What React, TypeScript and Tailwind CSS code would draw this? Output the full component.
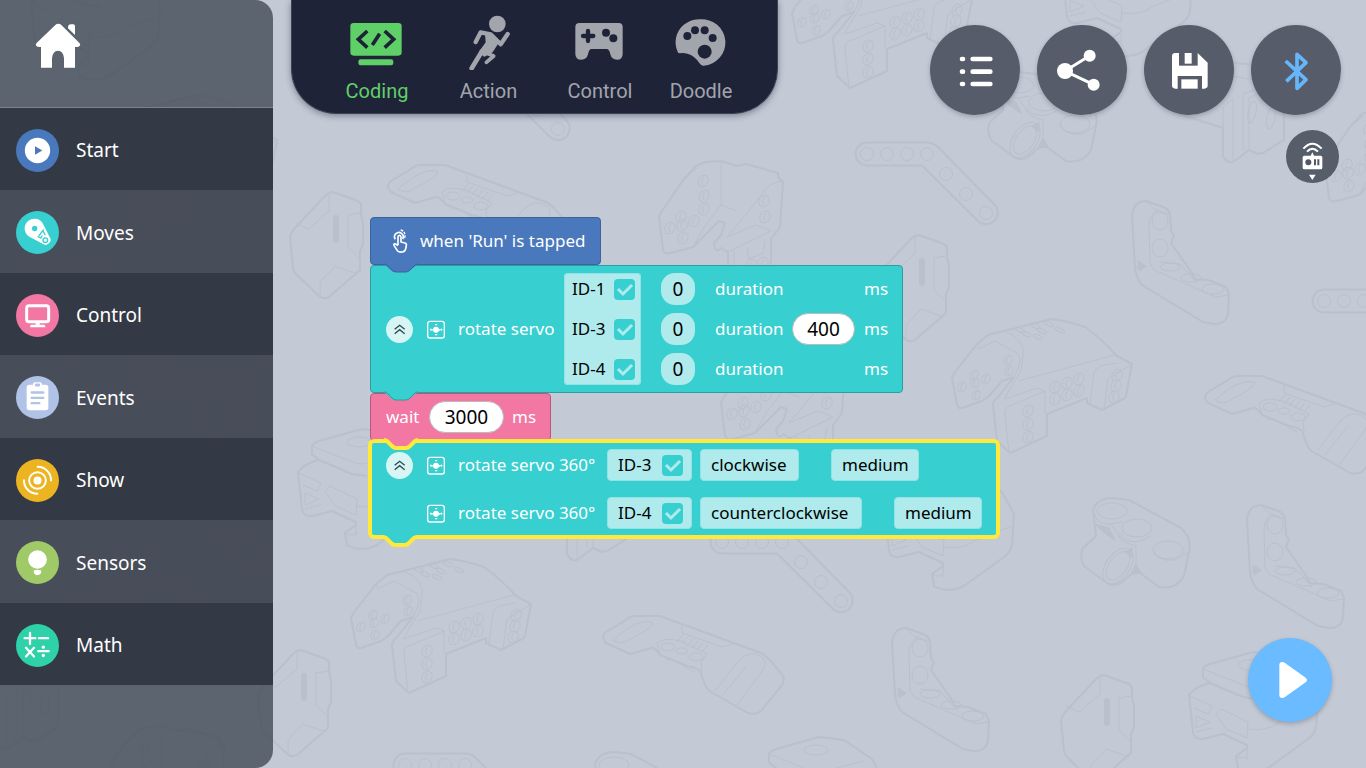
import { useState } from "react";
import type { ReactNode } from "react";

const LABEL_FONT = "font-['Noto_Sans','Open_Sans',sans-serif]";

/* ---------- backdrop ---------- */

function Holes({ at, rx = 4, ry = 5 }: { at: number[][]; rx?: number; ry?: number }) {
  return (
    <g>
      {at.map(([x, y]) => (
        <g key={`${x}-${y}`}>
          <ellipse cx={x} cy={y} rx={rx} ry={ry} transform={`rotate(25 ${x} ${y})`} />
          {ry > 3 && <path d={`M${x + 1} ${y - 4}q-4 4 -1 8`} />}
        </g>
      ))}
    </g>
  );
}

function Parts() {
  return (
    <defs>
      <g id="beam">
        <path strokeWidth="2" d="M0-11.5H60Q66-11.5 71-7L127 50A11.5 11.5 0 0 1 111 67L55 11.5H0A11.5 11.5 0 0 1 0-11.5Z" />
        {[[0, 0], [20, 0], [40, 0], [60, 0], [79, 20], [99, 40], [119, 59]].map(([x, y]) => (
          <circle key={x} cx={x} cy={y} r="6.5" />
        ))}
      </g>
      <g id="box">
        <path strokeWidth="2" d="M43 0 68 9 71 12V22L73 31V52L70 59V78L39 105Q34 108 29 104L6 82Q4 80 3 76L0 46Q0 42 5 36L35 4Q39 0 43 0Z" />
        <path d="M39 1V19L18 37 5 31M70 21 58 23V55L70 67M30 104V90L45 74 68 82" />
        <path strokeWidth="6" strokeLinecap="round" d="M46 26V48" />
      </g>
      <g id="plate">
        <path strokeWidth="2" d="M32 0H57L158 37Q166 41 180 60Q182 64 179 69L158 95Q153 99 145 97L108 76Q103 73 101 66L97 55Q92 51 84 50L57 39Q52 31 48 32L27 38 3 27Q-3 21 3 16L20 6Q27 0 32 0Z" />
        <path d="M10 24Q34 2 49 6 53 10 27 23 18 30 10 24M79 9V17L119 31 130 28M57 39 54 27Q62 20 80 26L104 38 98 46 99 56M64 45 66 42 92 56M112 75 136 44Q148 34 157 40 165 44 160 54L134 89M120 79 143 50M74 26 80 19M79 28 85 21M84 30 90 23M89 32 95 25M94 34 100 27M99 36 105 29" />
        <ellipse cx="65" cy="31" rx="7" ry="4" />
        <ellipse cx="79" cy="35" rx="6" ry="3" />
        <ellipse cx="93" cy="41" rx="7" ry="4" />
      </g>
      <g id="body">
        <path strokeWidth="2" d="M99 0Q116 2 133 8 150 20 165 37L180 45 174 77Q173 80 169 81L150 91 135 84V79L95 95V117L58 134 45 122 41 86Q41 82 46 78L62 58 50 62 36 78 30 82 10 89Q6 90 5 86L0 59 3 53 25 25 36 16 52 12Z" />
        <path d="M25 25 27 30 43 22 65 34Q68 36 68 42L66 50 62 58M52 12Q74 20 71 38L69 52 52 80M66 62 163 36M53 95Q52 88 60 86L93 72V95M53 95 57 134M93 72 85 69 53 80M138 84 142 54Q144 48 152 46L165 44M152 90 156 60 180 45" />
        <Holes at={[[22, 56], [10, 68], [23, 64], [34, 60], [24, 76], [56, 41], [57, 52]]} />
        <Holes at={[[76, 92], [76, 105], [76, 118], [103, 68], [115, 64], [127, 60], [103, 80], [115, 76], [127, 72], [165, 56], [164, 67], [162, 78]]} rx={5} ry={6} />
        <Holes at={[[68, 11], [83, 7], [97, 5], [74, 15], [90, 12], [108, 11], [86, 18]]} rx={5} ry={2} />
      </g>
      <g id="bracket">
        <path strokeWidth="2" d="M62 0 78 5 87 3 119 12V16L124 21 121 66 112 78V116L75 133Q64 135 56 129L55 122 60 118 69 121V91L62 87Q58 92 56 87L55 82 62 74 66 62 60 60 34 86 12 92Q6 94 4 89L0 55 3 50 25 18 37 5 46 1Z" />
        <path d="M62 1V44L78 50M62 44 45 66 34 86M124 20Q108 22 104 32L88 52 68 76 97 64 112 70 75 88 69 91M75 88V133M25 18 38 7M88 88 90 98 104 92 106 80" />
        <Holes at={[[44, 20], [45, 35], [45, 48], [22, 56], [11, 67], [23, 64], [35, 60], [24, 77], [105, 40], [106, 56], [92, 104], [104, 102]]} rx={5} ry={6} />
      </g>
      <g id="elbow">
        <path strokeWidth="2" d="M14 0 31 6Q37 8 38 14L39 30 42 35 39 42 60 72 63 78 76 79 94 86 97 93 96 112Q95 123 82 123L71 121 10 84Q4 76 3 67L0 14Q2 0 14 0Z" />
        <path d="M14 0 22 8 38 14M18 62 17 25Q17 12 27 9M18 62 22 69 84 96 97 94M3 67 14 65M28 61 48 63 56 72 65 82" />
        <path className="fill-[#bac1cd]" d="M6 60 14 65 7 70Z" />
        <ellipse cx="28" cy="20" rx="8" ry="9" />
        <ellipse cx="28" cy="47" rx="8" ry="9" />
        <ellipse cx="38" cy="66" rx="10" ry="4" />
        <ellipse cx="59" cy="77" rx="10" ry="4" />
        <ellipse cx="81" cy="88" rx="11" ry="5" />
      </g>
      <g id="clamp">
        <path strokeWidth="2" d="M12 12Q16 0 32 0L48 2 100 30Q111 40 108 54L103 78Q95 92 78 89L55 72 40 85Q32 89 26 85L3 68Q-2 58 2 50L15 38Z" />
        <path d="M13 16Q18 28 30 26L42 24M40 35Q42 46 60 43L70 38M72 52Q76 64 94 62L108 54M55 72V48Q44 46 37 38M30 26 40 40" />
        <path className="fill-[#bac1cd]" d="M14 26 28 30 34 42 22 34ZM51 50V60L44 54ZM55 66 60 75 50 76Z" />
        <ellipse cx="31" cy="13" rx="15" ry="8" />
        <ellipse cx="56" cy="30" rx="15" ry="9" />
        <ellipse cx="87" cy="52" rx="15" ry="9" />
        <ellipse cx="37" cy="68" rx="9" ry="16" transform="rotate(35 37 68)" />
        <ellipse cx="37" cy="68" rx="12" ry="20" transform="rotate(35 37 68)" />
      </g>
      <g id="mount">
        <path strokeWidth="2" d="M22 31 15 25V17Q16 14 22 12L65 0 90 3 118 22 130 44 128 75Q127 82 120 87L80 116Q64 124 50 116L48 104 59 96V93L35 82 15 87Q6 88 5 80L1 43Q8 34 22 31L55 45 70 47" />
        <path d="M15 17 58 34Q64 36 72 34L110 24M2 44 24 54 20 62 6 56M28 62 33 57 60 70 59 86 38 77ZM8 64 22 70 8 76ZM8 80 24 76M48 104Q54 108 60 104M60 77Q78 80 92 70L128 56M59 93V108M42 38 50 44" />
        <ellipse cx="62" cy="13" rx="12" ry="5" />
      </g>
      <g id="stand">
        <path strokeWidth="2" d="M4 2Q8-1 20 1L84 7Q88 9 87 20L107 22 111 28V82L90 95 85 96 76 92 60 104Q54 106 50 98V70L6 56Z" />
        <path d="M4 10 84 22 87 30 70 36V92M0 3 4 10M60 40 50 50V70M60 40V104M76 92V40L96 30M111 28 98 32 87 46" />
        <ellipse cx="79" cy="54" rx="4" ry="11" transform="rotate(12 79 54)" />
        <ellipse cx="98" cy="60" rx="4" ry="11" transform="rotate(12 98 60)" />
      </g>
    </defs>
  );
}

const scatter: [string, number, number][] = [
  ["beam", 867, 154], ["beam", 722, 542], ["beam", 1324, 301], ["beam", 405, 765], ["beam", 137, 499], ["beam", 439, 70],
  ["box", 290, 192], ["box", 258, 650], ["box", 876, 235], ["box", 1061, 675],
  ["plate", 603, 616], ["plate", 388, 165], ["plate", 1205, 376], ["plate", 43, 560],
  ["body", 351, 559], ["body", 952, 319], ["body", 97, 95], ["body", 792, -46],
  ["bracket", 659, 161], ["bracket", 100, 726], ["bracket", 135, 307], ["bracket", 721, 347], ["bracket", 1325, 109],
  ["elbow", 1132, 201], ["elbow", 1247, 505], ["elbow", 892, 628],
  ["clamp", 1081, 498], ["clamp", 988, 72], ["clamp", 583, 752],
  ["mount", 1188, 652], ["mount", 884, 470], ["mount", 297, 429], ["mount", 30, -40], ["mount", 754, 737], ["mount", 1062, -64],
  ["stand", 1173, 58], ["stand", 20, 255], ["stand", -53, 645], ["stand", 517, 456],
];

function Backdrop() {
  return (
    <svg
      aria-hidden="true"
      className="absolute inset-0 h-full w-full fill-none stroke-[#bac1cd]"
      viewBox="0 0 1366 768"
      preserveAspectRatio="xMinYMin slice"
      strokeLinejoin="round"
    >
      <Parts />
      {scatter.map(([name, x, y]) => (
        <use key={`${name}${x}`} href={`#${name}`} x={x} y={y} />
      ))}
    </svg>
  );
}

/* ---------- sidebar ---------- */

type Category = { name: string; box: string; art: ReactNode };

const categories: Category[] = [
  {
    name: "Start",
    box: "48 385.5 129 129",
    art: (
      <>
        <circle cx="112.5" cy="450" r="64.5" fill="#4979bc" />
        <circle cx="112.5" cy="450" r="38" fill="#fff" />
        <path d="M105 437v26l22-13z" fill="#4979bc" />
      </>
    ),
  },
  {
    name: "Moves",
    box: "48 632.5 129 129",
    art: (
      <>
        <circle cx="112.5" cy="697" r="64.5" fill="#37cfd0" />
        <path d="M103 656a29 29 0 0 1 27 17l18 36a15 15 0 0 1-20 22l-40-21a29 29 0 0 1 15-54z" fill="#fff" />
        <circle cx="104" cy="685" r="8" fill="#37cfd0" />
        <path d="M131 688l-15 20M113 709l9 5 5-8M136 705l-7-12" stroke="#37cfd0" strokeWidth="4" fill="none" />
        <circle cx="136" cy="720" r="7" fill="none" stroke="#37cfd0" strokeWidth="4" />
      </>
    ),
  },
  {
    name: "Control",
    box: "48 880.5 129 129",
    art: (
      <>
        <circle cx="112.5" cy="945" r="64.5" fill="#f377a3" />
        <rect x="80" y="916" width="66" height="48" rx="7" fill="none" stroke="#fff" strokeWidth="9" />
        <path d="M107 966h12v7h14q3 2 3 7H90q0-5 3-7h14z" fill="#fff" />
      </>
    ),
  },
  {
    name: "Events",
    box: "48 -12.5 129 129",
    art: (
      <>
        <circle cx="112.5" cy="52" r="64.5" fill="#b0c3e6" />
        <rect x="80" y="14" width="65" height="76" rx="8" fill="#fff" />
        <rect x="99" y="6" width="27" height="16" rx="6" fill="#fff" />
        <rect x="105" y="10" width="15" height="9" rx="4" fill="#b0c3e6" />
        <path d="M95 37h35M95 53h35M95 69h23" stroke="#b0c3e6" strokeWidth="7" strokeLinecap="round" />
      </>
    ),
  },
  {
    name: "Show",
    box: "48 236.5 129 129",
    art: (
      <>
        <circle cx="112.5" cy="301" r="64.5" fill="#ecb421" />
        <circle cx="112.5" cy="301" r="12" fill="#fff" />
        <g fill="none" stroke="#fff" strokeWidth="6" strokeLinecap="round">
          <circle cx="112.5" cy="301" r="25" />
          <path d="M113 260a40 40 0 0 1 40 41M112 341a40 40 0 0 1-40-41" />
        </g>
      </>
    ),
  },
  {
    name: "Sensors",
    box: "48 482.5 129 129",
    art: (
      <>
        <circle cx="112.5" cy="547" r="64.5" fill="#9fca67" />
        <circle cx="112.5" cy="538" r="28" fill="#fff" />
        <path d="M101 571q11-4 23 0 0 14-12 14-11 0-11-14z" fill="#fff" />
      </>
    ),
  },
  {
    name: "Math",
    box: "48 731.5 129 129",
    art: (
      <>
        <circle cx="112.5" cy="796" r="64.5" fill="#2ed1a8" />
        <path
          d="M90 758v33M74 774h32M117 774h27M78 803l24 26M102 803l-24 26M115 813h31"
          stroke="#fff"
          strokeWidth="7"
          strokeLinecap="round"
        />
        <circle cx="130" cy="801" r="5" fill="#fff" />
        <circle cx="130" cy="826" r="5" fill="#fff" />
      </>
    ),
  },
];

function Sidebar() {
  return (
    <aside className="relative flex w-[273px] shrink-0 flex-col overflow-hidden rounded-r-[18px] bg-[#3a414c]/75">
      <div className="flex h-[108px] items-start border-b border-[#7c828d] pl-[34px] pt-[22px]">
        <button type="button" aria-label="Home">
          <svg className="h-12 w-12" viewBox="102 66 144 144" fill="#fff" aria-hidden="true">
            <path d="M175 71q5 0 9 4l55 55q4 5-1 9-2 2-7 2h-6v62h-33v-28q-2-23-18-23t-18 23v28h-33v-62h-6q-5 0-7-2-5-4-1-9l57-55q4-4 9-4z" />
            <path d="M204 82q0-9 9-9h7q5 0 5 6v26l-21-20z" />
          </svg>
        </button>
      </div>
      <nav aria-label="Block categories">
        {categories.map((c) => (
          <button
            key={c.name}
            type="button"
            className="flex h-[82px] w-full items-center gap-[17px] bg-[#292f3b]/80 pl-4 pt-0.5 even:h-[83px] even:bg-[#434954]/80"
          >
            <svg className="h-[43px] w-[43px]" viewBox={c.box} aria-hidden="true">
              {c.art}
            </svg>
            <span className={`text-[19px] leading-6 text-white ${LABEL_FONT}`}>{c.name}</span>
          </button>
        ))}
      </nav>
    </aside>
  );
}

/* ---------- top bar ---------- */

const tabs = [
  {
    name: "Coding",
    box: "207 36 168 174",
    art: (
      <>
        <rect x="211" y="69" width="154" height="98" rx="10" fill="currentColor" />
        <rect x="235" y="178" width="105" height="18" rx="7" fill="currentColor" />
        <path d="M262 93l-27 25 27 25M314 93l27 25-27 25M299 101l-22 34" fill="none" stroke="#1f2338" strokeWidth="11" />
      </>
    ),
  },
  {
    name: "Action",
    box: "544 34 168 174",
    art: (
      <g fill="none" stroke="currentColor" strokeLinecap="round" strokeLinejoin="round">
        <circle cx="653" cy="70" r="25" fill="currentColor" stroke="none" />
        <path d="M588 124l15-29 30 6 30 30 21-31" strokeWidth="13" />
        <path d="M620 98l34 26-18 28-22 12-12-10 20-28z" fill="currentColor" strokeWidth="8" />
        <path d="M607 152l-31 51" strokeWidth="14" />
        <path d="M622 158l20 8-22 19" strokeWidth="11" />
      </g>
    ),
  },
  {
    name: "Control",
    box: "876 36 168 174",
    art: (
      <>
        <path
          d="M898 69h118q12 0 12 12v80q0 18-17 18-16 0-20-16-3-15-10-16h-48q-6 1-9 16-4 16-20 16-18 0-18-18V81q0-12 12-12z"
          fill="currentColor"
        />
        <path d="M924 93v30M909 108h31" stroke="#1f2338" strokeWidth="13" strokeLinecap="round" />
        <circle cx="978" cy="98" r="12" fill="#1f2338" />
        <circle cx="1000" cy="115" r="12" fill="#1f2338" />
      </>
    ),
  },
  {
    name: "Doodle",
    box: "1179 34 168 174",
    art: (
      <>
        <path
          d="M1260 56a70 69 0 0 1 11 139q-7 1-13-8-14-22-36-28-12-3-23-1-6 0-7-7a70 69 0 0 1 68-95z"
          fill="currentColor"
        />
        <circle cx="1274" cy="153" r="21" fill="#1f2338" />
        <circle cx="1222" cy="106" r="12" fill="#1f2338" />
        <circle cx="1245" cy="89" r="12" fill="#1f2338" />
        <circle cx="1274" cy="89" r="12" fill="#1f2338" />
        <circle cx="1298" cy="112" r="12" fill="#1f2338" />
      </>
    ),
  },
];

function ModeTabs() {
  const [active, setActive] = useState("Coding");
  return (
    <nav
      aria-label="Modes"
      className="grid h-[114px] grid-cols-[112px_111px_112px_90px] rounded-b-[45px] border-x border-b border-[#3c4154] bg-[#1f2338] pl-[29px] pr-[31px] shadow-[0_2px_6px_rgba(40,45,60,0.45)]"
    >
      {tabs.map((t) => (
        <button
          key={t.name}
          type="button"
          onClick={() => setActive(t.name)}
          aria-current={active === t.name}
          className="flex flex-col items-center gap-[9px] pt-3 text-[#a2a5ac] aria-[current=true]:text-[#5fd068]"
        >
          <svg className="h-[58px] w-14" viewBox={t.box} aria-hidden="true">
            {t.art}
          </svg>
          <span className="font-[Roboto,sans-serif] text-xl leading-6">{t.name}</span>
        </button>
      ))}
    </nav>
  );
}

const tools = [
  {
    name: "Programs",
    box: "89 76 270 270",
    art: (
      <g stroke="#fff" strokeWidth="14" strokeLinecap="round">
        <path d="M217 178h53M217 216h53M217 253h53" />
        <path d="M185 178h3M185 216h3M185 253h3" />
      </g>
    ),
  },
  {
    name: "Share",
    box: "410 76 270 270",
    art: (
      <>
        <path d="M568 168l-74 46 86 41" fill="none" stroke="#fff" strokeWidth="9" />
        <circle cx="494" cy="214" r="24" fill="#fff" />
        <circle cx="568" cy="168" r="18" fill="#fff" />
        <circle cx="580" cy="255" r="18" fill="#fff" />
      </>
    ),
  },
  {
    name: "Save",
    box: "731 76 270 270",
    art: (
      <>
        <path d="M825 160h67l30 29v68q0 10-10 10h-87q-10 0-10-10v-87q0-10 10-10z" fill="#fff" />
        <path d="M836 156h56v42h-56z" fill="#575c69" />
        <path d="M853 160h21v32h-21z" fill="#fff" />
        <path d="M832 229h73v40h-73z" fill="#575c69" />
        <path d="M843 239h49v28h-49z" fill="#fff" />
      </>
    ),
  },
  {
    name: "Bluetooth",
    box: "1051 76 270 270",
    art: (
      <path
        d="M1155 184l61 56-27 26V164l27 25-59 56"
        fill="none"
        stroke="#66b6fb"
        strokeWidth="11"
        strokeLinejoin="round"
      />
    ),
  },
];

/* ---------- script blocks ---------- */

function Tab({ fill, stroke, width = 1 }: { fill: string; stroke: string; width?: number }) {
  return (
    <svg
      aria-hidden="true"
      className="absolute left-3 top-full z-10 h-3 w-9 overflow-visible"
      viewBox="0 0 36 12"
    >
      <path d="M1-3V0L10 8Q11 8 12 8H23Q25 8 26 7L35 0V-3Z" fill={fill} />
      <path d="M1 0Q3 0 4 1L9 6Q11 8 13 8H23Q25 8 27 6L32 1Q33 0 35 0" fill="none" stroke={stroke} strokeWidth={width} />
    </svg>
  );
}

function Collapse() {
  return (
    <button type="button" aria-label="Collapse" className="h-[27px] w-[27px]">
      <svg className="h-full w-full" viewBox="78 333 81 81" aria-hidden="true">
        <circle cx="118.5" cy="373.5" r="40.5" fill="#d7f5f5" />
        <path d="M104 373l15-12 15 12M104 386l15-12 15 12" fill="none" stroke="#2c4a50" strokeWidth="4" />
      </svg>
    </button>
  );
}

function ServoIcon() {
  return (
    <svg className="h-[19px] w-[19px] shrink-0" viewBox="201 345 57 57" aria-hidden="true">
      <rect x="203" y="349" width="50" height="50" rx="7" fill="none" stroke="#fff" strokeWidth="4" />
      <circle cx="228" cy="374" r="9" fill="#fff" />
      <path
        d="M225 357h7v4h-7zM225 387h7v4h-7zM209 374l4-4 4 4-4 4zM217 372h3v5h-3zM248 374l-4-4-4 4 4 4zM237 372h3v5h-3z"
        fill="#fff"
      />
    </svg>
  );
}

function ServoCheck({ id, className }: { id: string; className: string }) {
  return (
    <label className={`flex h-8 items-center justify-between text-black ${className}`}>
      {id}
      <span className="grid">
        <input
          type="checkbox"
          defaultChecked
          className="peer col-start-1 row-start-1 h-[21px] w-[21px] appearance-none rounded-[4px] bg-[#37cfd0]"
        />
        <svg
          className="pointer-events-none invisible col-start-1 row-start-1 h-[21px] w-[21px] peer-checked:visible"
          viewBox="0 0 21 21"
          fill="none"
          aria-hidden="true"
        >
          <path d="M4 10l5 5 9-9" stroke="#afebec" strokeWidth="3" />
        </svg>
      </span>
    </label>
  );
}

function NumberField({ label, value, className }: { label: string; value: string; className: string }) {
  return (
    <input
      aria-label={label}
      defaultValue={value}
      inputMode="numeric"
      className={`h-8 text-center text-[19px] leading-6 text-black ${className}`}
    />
  );
}

function Choice({ label, value, options, className }: { label: string; value: string; options: string[]; className: string }) {
  return (
    <select
      aria-label={label}
      defaultValue={value}
      className={`h-8 appearance-none rounded-[4px] border border-[#93e3e4] bg-[#afebec] pl-[10px] text-black ${className}`}
    >
      {options.map((o) => (
        <option key={o}>{o}</option>
      ))}
    </select>
  );
}

const rotations = [
  { id: "ID-3", direction: "clockwise", width: "w-[99px]" },
  { id: "ID-4", direction: "counterclockwise", width: "w-[162px]" },
];

function Script() {
  return (
    <section
      aria-label="Program"
      className={`ml-[97px] mt-[35px] flex flex-col items-start text-[17px] leading-6 text-white ${LABEL_FONT}`}
    >
      <div className="relative flex h-12 w-[231px] items-center gap-2 rounded-[4px] border border-[#3c649c] bg-[#4979bc] pl-[17px]">
        <svg className="h-[26px] w-6 shrink-0" viewBox="84 71 72 78" fill="none" stroke="#fff" aria-hidden="true">
          <path
            d="M114 122V98q0-5 4-5t5 5v15l12 3q5 1 4 7-1 18-12 20-11 1-15-4l-10-16q-2-6 5-4l7 5"
            strokeWidth="5"
            strokeLinejoin="round"
          />
          <path d="M106 105a13 13 0 1 1 22-1" strokeWidth="5" />
          <path d="M122 77q13 3 13 17 0 6-3 10" strokeWidth="4" strokeDasharray="8 3" />
        </svg>
        when 'Run' is tapped
        <Tab fill="#4979bc" stroke="#3c649c" />
      </div>

      <div className="relative flex h-32 w-[533px] items-center rounded-[4px] border border-[#2b9fa0] bg-[#37cfd0] pl-[15px]">
        <Collapse />
        <span className="ml-[14px] mr-3 flex">
          <ServoIcon />
        </span>
        <span className="w-[98px]">rotate servo</span>
        <div className="ml-2 flex h-28 w-[77px] flex-col gap-2 rounded-[4px] bg-[#afebec] outline-1 -outline-offset-1 outline-[#93e3e4]">
          {["ID-1", "ID-3", "ID-4"].map((id) => (
            <ServoCheck key={id} id={id} className="pl-2 pr-[6px]" />
          ))}
        </div>
        <div className="ml-5 flex flex-col gap-2">
          {["ID-1", "ID-3", "ID-4"].map((id) => (
            <div key={id} className="flex h-8 items-center">
              <NumberField label={`${id} angle`} value="0" className="w-[34px] rounded-[14px] bg-[#afebec]" />
              <span className="ml-5 w-[69px]">duration</span>
              <span className="ml-2 mr-[9px] flex w-[63px]">
                {id === "ID-3" && (
                  <NumberField label="Duration" value="400" className="w-full rounded-full border border-[#b9bcbc] bg-white" />
                )}
              </span>
              ms
            </div>
          ))}
        </div>
        <Tab fill="#37cfd0" stroke="#2b9fa0" />
      </div>

      <div className="relative flex h-12 w-[181px] items-center rounded-[4px] border border-[#b65a7b] bg-[#f377a3] pl-[15px]">
        <span className="w-[35px]">wait</span>
        <span className="mx-2 flex">
          <NumberField label="Wait time" value="3000" className="w-[75px] rounded-full border border-[#b9bcbc] bg-white" />
        </span>
        ms
        <Tab fill="#f377a3" stroke="#ffe93b" width={4} />
      </div>

      <div className="relative flex h-24 w-[628px] flex-col rounded-[4px] bg-[#37cfd0] pl-4 outline-4 -outline-offset-2 outline-[#ffe93b]">
        {rotations.map((r, i) => (
          <div key={r.id} className="flex h-12 items-center">
            <span className="flex w-[27px]">{i === 0 && <Collapse />}</span>
            <span className="ml-[14px] mr-3 flex">
              <ServoIcon />
            </span>
            <span className="w-[141px]">rotate servo 360°</span>
            <ServoCheck id={r.id} className="mx-2 w-[85px] rounded-[4px] border border-[#93e3e4] bg-[#afebec] pl-[10px] pr-[8px]" />
            <Choice label={`${r.id} direction`} value={r.direction} options={["clockwise", "counterclockwise"]} className={r.width} />
            <span className="ml-8 flex">
              <Choice label={`${r.id} speed`} value="medium" options={["slow", "medium", "fast"]} className="w-[88px]" />
            </span>
          </div>
        ))}
        <Tab fill="#37cfd0" stroke="#ffe93b" width={4} />
      </div>
    </section>
  );
}

/* ---------- page ---------- */

export default function App() {
  return (
    <div className="relative flex min-h-screen overflow-hidden bg-[#c3c9d5]">
      <Backdrop />
      <Sidebar />
      <main className="relative flex min-w-0 flex-1 flex-col">
        <header className="flex items-start justify-between pl-[18px] pr-[25px]">
          <ModeTabs />
          <div className="flex gap-[17px] pt-[25px]">
            {tools.map((t) => (
              <button
                key={t.name}
                type="button"
                aria-label={t.name}
                className="h-[90px] w-[90px] rounded-full bg-[#515664]/95 shadow-[0_2px_4px_rgba(60,66,80,0.3)]"
              >
                <svg className="h-full w-full" viewBox={t.box} aria-hidden="true">
                  {t.art}
                </svg>
              </button>
            ))}
          </div>
        </header>
        <div className="flex h-[67px] justify-end pr-[27px] pt-[15px]">
          <button type="button" aria-label="Remote" className="h-[53px] w-[53px] shrink-0 rounded-full bg-[#505864]/95">
            <svg className="h-full w-full" viewBox="1158 390 159 159" aria-hidden="true">
              <path d="M1210 446q27-30 55 0M1221 455q16-18 33 0" fill="none" stroke="#fff" strokeWidth="6" />
              <path d="M1237 457l5 10h20q5 0 5 5v31q0 5-5 5h-49q-5 0-5-5v-31q0-5 5-5h19zM1227 524h20l-10 16z" fill="#fff" />
              <circle cx="1225" cy="487" r="9" fill="#505864" />
              <path d="M1242 478h6v18h-6zM1252 478h6v18h-6z" fill="#505864" />
            </svg>
          </button>
        </div>
        <Script />
        <div className="mt-auto flex justify-end pb-[46px] pr-[34px]">
          <button
            type="button"
            aria-label="Run"
            className="h-[84px] w-[84px] rounded-full bg-[#6abbff] shadow-[0_2px_4px_rgba(60,66,80,0.3)]"
          >
            <svg className="h-full w-full" viewBox="263 56 252 252" fill="#fff" aria-hidden="true">
              <path d="M357 137q0-9 9-9 4 0 8 3l62 44q8 7 0 14l-62 44q-4 3-8 3-9 0-9-9z" />
            </svg>
          </button>
        </div>
      </main>
    </div>
  );
}
